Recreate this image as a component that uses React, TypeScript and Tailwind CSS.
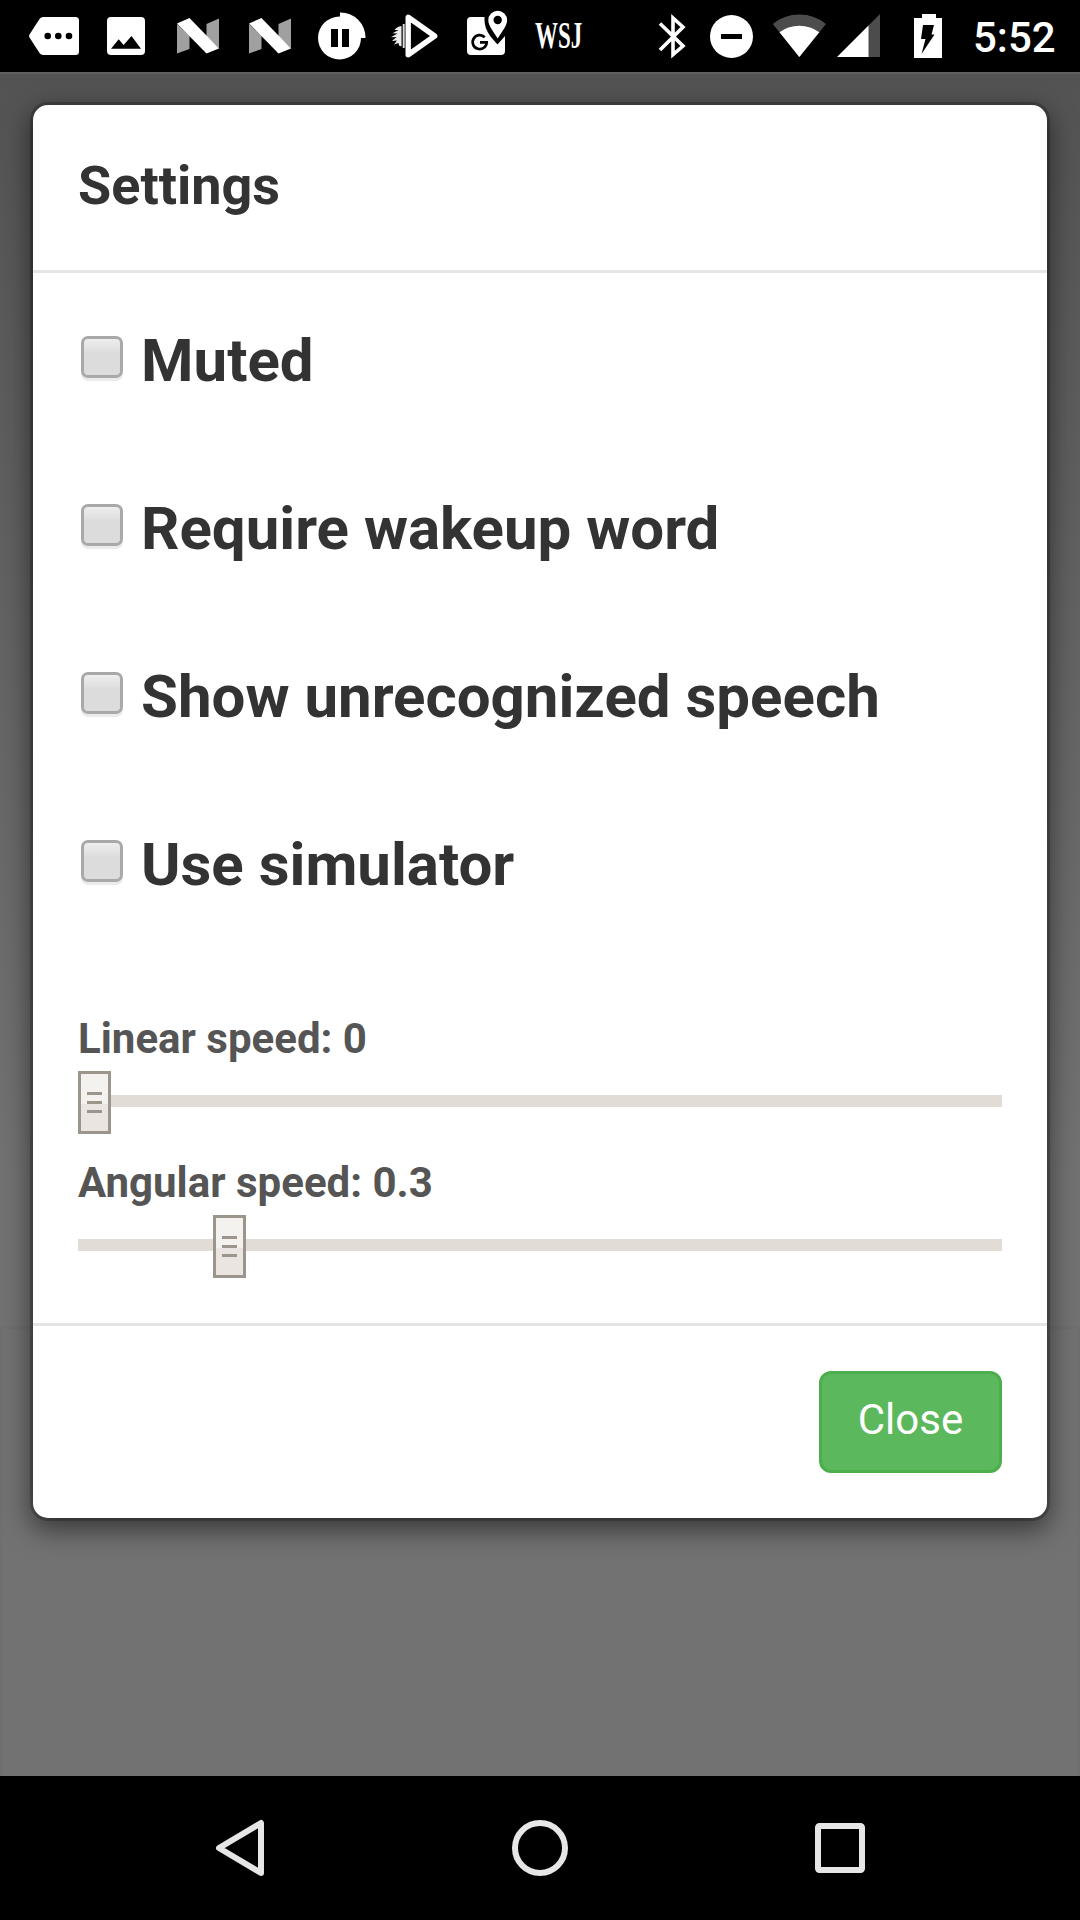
import type { ReactNode } from "react";

function Slot({ left, width, children }: { left: string; width: string; children: ReactNode }) {
  return <div className={`${left} ${width} h-[72px] shrink-0`}>{children}</div>;
}

function NIcon() {
  return (
    <svg width="44" height="72" viewBox="0 0 44 72">
      <path d="M1 24 13.500 36V49L1 53.500zM30.500 24 43 18.500V48.500L30.500 37z" fill="#a0a0a0" />
      <path d="M1 23.500 13.500 18 43 48.500 30.500 53.500z" fill="#fff" />
    </svg>
  );
}

function StatusBar() {
  return (
    <header className="flex h-[72px] w-full shrink-0 bg-black text-white">
      <Slot left="ml-[28px]" width="w-[52px]">
        <svg width="52" height="72" viewBox="0 0 52 72">
          <path d="M15 17H47.500Q51 17 51 20.500V51.500Q51 55 47.500 55H15Q13 55 11.500 53L1.500 37.500Q.5 36 1.500 34.500L11.500 19Q13 17 15 17z" fill="#fff" />
          <circle cx="19.700" cy="36" r="3.300" />
          <circle cx="30.300" cy="36" r="3.300" />
          <circle cx="41" cy="36" r="3.300" />
        </svg>
      </Slot>
      <Slot left="ml-[26px]" width="w-[40px]">
        <svg width="40" height="72" viewBox="0 0 40 72">
          <rect x="1" y="17" width="38" height="38" rx="4" fill="#fff" />
          <path d="M5 48.800 12.700 39.200 17.600 45 25.500 36 35 48.800z" />
        </svg>
      </Slot>
      <Slot left="ml-[30px]" width="w-[44px]"><NIcon /></Slot>
      <Slot left="ml-[28px]" width="w-[44px]"><NIcon /></Slot>
      <Slot left="ml-[26px]" width="w-[48px]">
        <svg width="48" height="72" viewBox="0 0 48 72">
          <circle cx="21.500" cy="38" r="21.500" fill="#fff" />
          <path d="M22 12.500A25 25 0 0 1 47.500 38H36L22 27z" fill="#fff" />
          <path d="M13 29h7v18h-7zM24 29h7v18h-7z" />
        </svg>
      </Slot>
      <Slot left="ml-[24px]" width="w-[50px]">
        <svg width="50" height="72" viewBox="0 0 50 72">
          <path d="M18.200 17.300V54.700L44.700 36z" fill="none" stroke="#fff" strokeWidth="5.400" strokeLinejoin="round" />
          <path d="M13.700 24v24" stroke="#ddd" strokeWidth="2" />
          <path d="M11.500 26C8 26.500 6 28 4.500 30L8.500 30 2.500 33.200 7.500 33.500 .8 37.200 6.500 37 2 41 7 40.500 4 44.500 8.500 43 9 45.500 11.500 46.500z" fill="#eee" />
        </svg>
      </Slot>
      <Slot left="ml-[26px]" width="w-[44px]">
        <svg width="44" height="72" viewBox="0 0 44 72">
          <rect x="1" y="17" width="38" height="38" rx="4" fill="#fff" />
          <path d="M18.500 13H44V36.500L31.500 44.500 24.500 36.500Q18.500 28.500 18.500 20z" />
          <path d="M31.500 44.500 39 36V46H30z" fill="#fff" />
          <path d="M31.700 38.500C27 31 22.300 25.500 22.300 20.200a9.400 9.400 0 0 1 18.800 0C41.100 25.500 36.400 31 31.700 38.500z" fill="#fff" />
          <circle cx="31.700" cy="20" r="4.200" />
          <path d="M18.700 37.200A7 7 0 1 0 20.700 42.300H14" fill="none" stroke="#000" strokeWidth="2.700" />
        </svg>
      </Slot>
      <Slot left="ml-[25px]" width="w-[48px]">
        <div className="w-[85px] origin-left scale-x-[0.620] font-['Liberation_Serif',serif] text-[37px] font-bold leading-[72px]">WSJ</div>
      </Slot>
      <Slot left="ml-[75px]" width="w-[30px]">
        <svg width="30" height="72" viewBox="0 0 30 72">
          <path d="M2 23.500 25 46 15 54.500V18L25 27 2 50" fill="none" stroke="#fff" strokeWidth="3.600" />
        </svg>
      </Slot>
      <Slot left="ml-[22px]" width="w-[44px]">
        <svg width="44" height="72" viewBox="0 0 44 72">
          <circle cx="21.500" cy="36.500" r="21.500" fill="#fff" />
          <path d="M11 34h21v5H11z" />
        </svg>
      </Slot>
      <Slot left="ml-[18px]" width="w-[54px]">
        <svg width="54" height="72" viewBox="0 0 54 72">
          <path d="M.8 24Q12 14.500 27.300 14.500T54 24L27.300 57z" fill="#4c4c4c" />
          <path d="M7.500 32.200Q16 25.700 27.300 25.700T47.300 32.200L27.300 57z" fill="#fff" />
        </svg>
      </Slot>
      <Slot left="ml-[11px]" width="w-[44px]">
        <svg width="44" height="72" viewBox="0 0 44 72">
          <path d="M43 14V57H31V26z" fill="#4c4c4c" />
          <path d="M31.500 25.500V57H0z" fill="#fff" />
        </svg>
      </Slot>
      <Slot left="ml-[33px]" width="w-[30px]">
        <svg width="30" height="72" viewBox="0 0 30 72">
          <path d="M8 14h14v4h6V58H0V18h8z" fill="#fff" />
          <path d="M9 25H20L17.500 34.500H20.500L7.500 54 11.500 39H7z" />
        </svg>
      </Slot>
      <div className="ml-[29px] whitespace-nowrap font-[Roboto,sans-serif] text-[42px] font-medium leading-[75px]">5:52</div>
    </header>
  );
}

function Option({ label }: { label: string }) {
  return (
    <label className="flex h-[168px] items-start">
      <span className="ml-[3px] mt-[63px] h-[42px] w-[42px] shrink-0 rounded-[7px] border-[3px] border-[#a9a9a9] bg-linear-to-b from-[#eeeeee] to-[#dcdcdc] to-40% shadow-[0_3px_0_#ebebeb]" />
      <span className="ml-[18px] mt-[52px] whitespace-nowrap text-[60px] font-bold leading-[72px] text-[#333]">{label}</span>
    </label>
  );
}

function Speed({ label, offset }: { label: string; offset: string }) {
  return (
    <div className="h-[144px]">
      <div className="h-[63px] whitespace-nowrap text-[42px] font-bold leading-[62px] text-[#555]">{label}</div>
      <div className="flex h-[63px] items-center">
        <div className={`${offset} mt-[-3px] h-[12px] bg-[#e1dcd6]`} />
        <div className="flex h-[63px] w-[33px] flex-col items-center gap-[6px] border-[3px] border-[#9b958c] bg-[linear-gradient(#f4f2ef_30px,#ebe5e2_30px)] pt-[18px]">
          <div className="h-[3px] w-[15px] bg-[#9b958c]" />
          <div className="h-[3px] w-[15px] bg-[#9b958c]" />
          <div className="h-[3px] w-[15px] bg-[#9b958c]" />
        </div>
        <div className="mt-[-3px] h-[12px] flex-1 bg-[#e1dcd6]" />
      </div>
    </div>
  );
}

export default function App() {
  return (
    <div className="flex h-[1920px] w-[1080px] flex-col overflow-hidden bg-black font-[Roboto,sans-serif]">
      <StatusBar />
      <main className="relative h-[1704px] overflow-hidden border-t-2 border-[#606060] bg-[linear-gradient(#535353,#727272_1100px)] px-[33px] pt-[31px]">
        <div className="absolute inset-x-0 bottom-0 h-[450px] border-x-[3px] border-t-[3px] border-[#6f6f6f]" />
        <section className="relative h-[1413px] rounded-[15px] bg-white shadow-[0_0_0_3px_rgba(0,0,0,0.2),0_9px_27px_3px_rgba(0,0,0,0.5)]">
          <div className="h-[168px] border-b-[3px] border-[#e5e5e5] px-[45px] pt-[43px]">
            <h4 className="text-[54px] font-bold leading-[75px] text-[#333]">Settings</h4>
          </div>
          <div className="h-[1050px] px-[45px]">
            <Option label="Muted" />
            <Option label="Require wakeup word" />
            <Option label="Show unrecognized speech" />
            <Option label="Use simulator" />
            <div className="pt-[63px]">
              <Speed label="Linear speed: 0" offset="w-0" />
              <Speed label="Angular speed: 0.3" offset="w-[135px]" />
            </div>
          </div>
          <div className="flex justify-end border-t-[3px] border-[#e5e5e5] px-[45px] pt-[45px]">
            <button className="h-[102px] w-[183px] rounded-[12px] border-[3px] border-[#4cae4c] bg-[#5cb85c] pb-[4px] text-[42px] leading-[90px] text-white">Close</button>
          </div>
        </section>
      </main>
      <nav className="flex h-[144px] items-center bg-black pl-[210px]">
        <svg width="60" height="144" viewBox="0 0 60 144" fill="none" stroke="#e6e6e6" strokeWidth="6" strokeLinejoin="round">
          <path d="M51 47V97L9 72z" />
        </svg>
        <svg className="ml-[240px]" width="60" height="144" viewBox="0 0 60 144" fill="none" stroke="#e6e6e6" strokeWidth="6">
          <circle cx="30" cy="72" r="25" />
        </svg>
        <svg className="ml-[240px]" width="60" height="144" viewBox="0 0 60 144" fill="none" stroke="#e6e6e6" strokeWidth="6">
          <rect x="8" y="50" width="44" height="44" rx="1.500" />
        </svg>
      </nav>
    </div>
  );
}
